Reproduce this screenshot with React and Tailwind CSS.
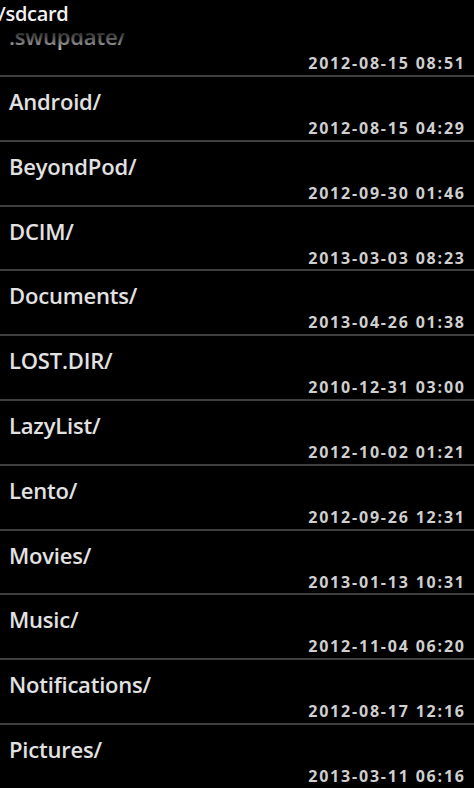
import React from "react";

const rows = [
  [".swupdate/", "2012-08-15 08:51"],
  ["Android/", "2012-08-15 04:29"],
  ["BeyondPod/", "2012-09-30 01:46"],
  ["DCIM/", "2013-03-03 08:23"],
  ["Documents/", "2013-04-26 01:38"],
  ["LOST.DIR/", "2010-12-31 03:00"],
  ["LazyList/", "2012-10-02 01:21"],
  ["Lento/", "2012-09-26 12:31"],
  ["Movies/", "2013-01-13 10:31"],
  ["Music/", "2012-11-04 06:20"],
  ["Notifications/", "2012-08-17 12:16"],
  ["Pictures/", "2013-03-11 06:16"],
];

export default function App() {
  return (
    <div className="w-[474px] h-[788px] bg-black overflow-hidden flex flex-col font-['Open_Sans',sans-serif]">
      <div className="h-[33px] shrink-0 pt-[2px] -ml-[2px] text-[20px] leading-[24px] font-semibold text-[#f2f2f2] tracking-[-0.3px]">
        /sdcard
      </div>
      <div className="relative flex-1 overflow-hidden">
        <div className="-mt-[20.8px] flex flex-col">
          {rows.map(([name, date]) => (
            <div
              key={name}
              className="h-[64.8px] shrink-0 border-b-2 border-[#3e3e3e] flex flex-col pl-[9px] pr-[10px]"
            >
              <div className="pt-[12px] text-[22px] leading-[24px] font-semibold text-[#e2e2e2] tracking-[-0.2px]">
                {name}
              </div>
              <div className="mt-[7px] self-end text-[16px] leading-[16px] font-bold text-[#cfcfcf] tracking-[1.8px] mr-[-1.8px]">
                {date}
              </div>
            </div>
          ))}
        </div>
        <div className="absolute top-0 left-0 right-0 h-[22px] bg-gradient-to-b from-black/80 to-transparent pointer-events-none" />
      </div>
    </div>
  );
}
